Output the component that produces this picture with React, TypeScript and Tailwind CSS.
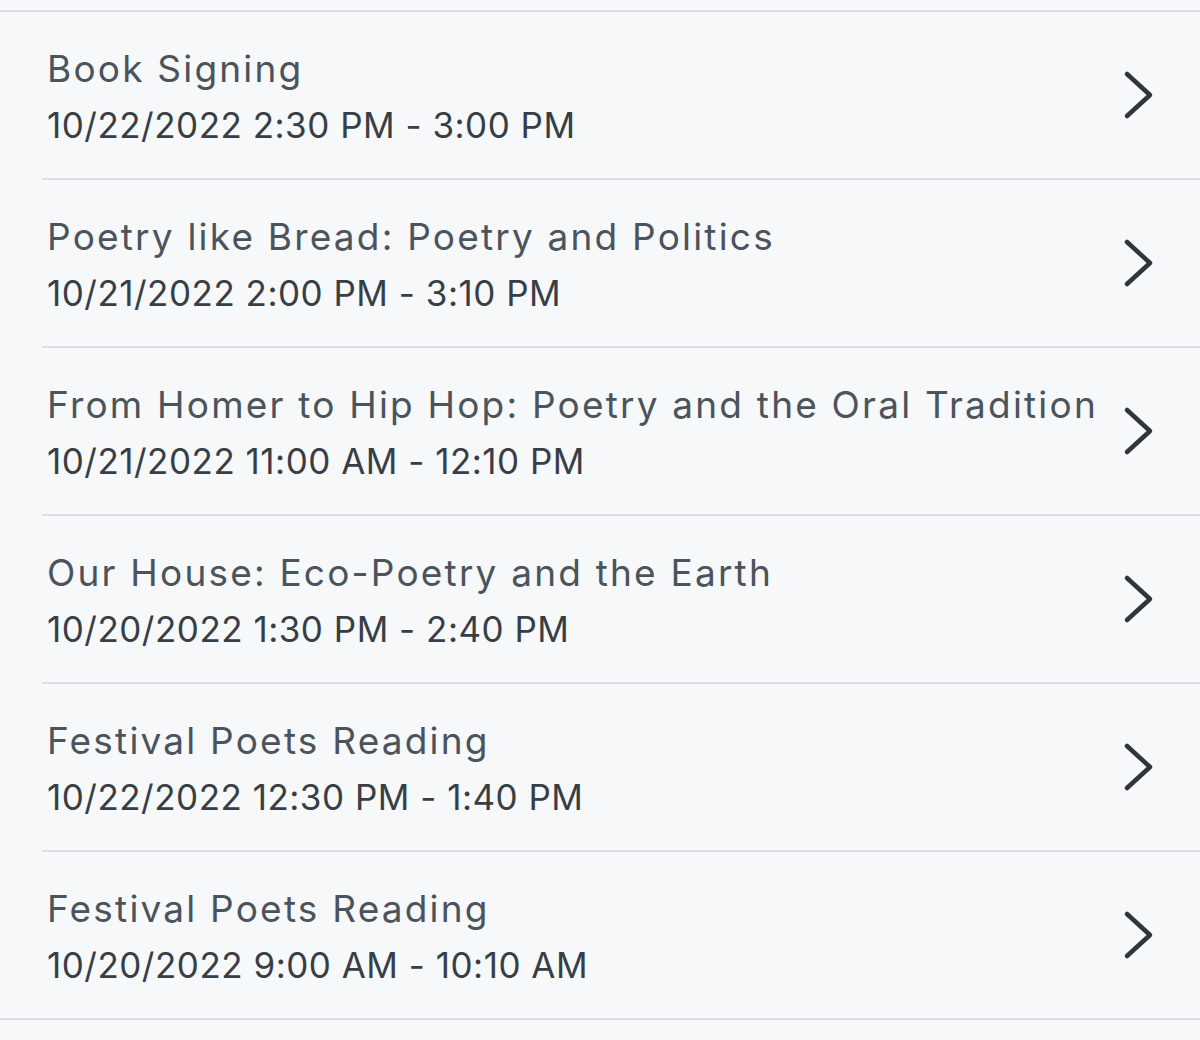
import React from "react";

const items = [
  ["Book Signing", "10/22/2022 2:30 PM - 3:00 PM"],
  ["Poetry like Bread: Poetry and Politics", "10/21/2022 2:00 PM - 3:10 PM"],
  ["From Homer to Hip Hop: Poetry and the Oral Tradition", "10/21/2022 11:00 AM - 12:10 PM"],
  ["Our House: Eco-Poetry and the Earth", "10/20/2022 1:30 PM - 2:40 PM"],
  ["Festival Poets Reading", "10/22/2022 12:30 PM - 1:40 PM"],
  ["Festival Poets Reading", "10/20/2022 9:00 AM - 10:10 AM"],
];

function Chevron() {
  return (
    <svg width="34" height="52" viewBox="0 0 34 52" fill="none">
      <path d="M5 5 L28 26 L5 47" stroke="#2f353b" strokeWidth="4.5" strokeLinecap="round" strokeLinejoin="round" />
    </svg>
  );
}

export default function App() {
  return (
    <div className="w-[1200px] h-[1040px] bg-[#f7f8fa] pt-[10px] overflow-hidden" style={{ fontFamily: 'Inter, "Liberation Sans", Arial, sans-serif' }}>
      <div className="h-[2px] bg-[#dcdee2]" />
      {items.map(([t, d], i) => (
        <div key={i} className="pl-[42px]">
          <div className="h-[166px] flex items-center pr-[44px]">
            <div className="flex-1 pl-[5px] pt-[4px]">
              <div className="text-[37px] leading-[56px] text-[#4b535b] tracking-[2.2px] whitespace-nowrap">{t}</div>
              <div className="text-[35px] leading-[56px] text-[#383e45] tracking-[0.5px] whitespace-nowrap">{d}</div>
            </div>
            <Chevron />
          </div>
          <div className={i === items.length - 1 ? "h-[2px] bg-[#dcdee2] -ml-[42px]" : "h-[2px] bg-[#dcdee2]"} />
        </div>
      ))}
    </div>
  );
}
